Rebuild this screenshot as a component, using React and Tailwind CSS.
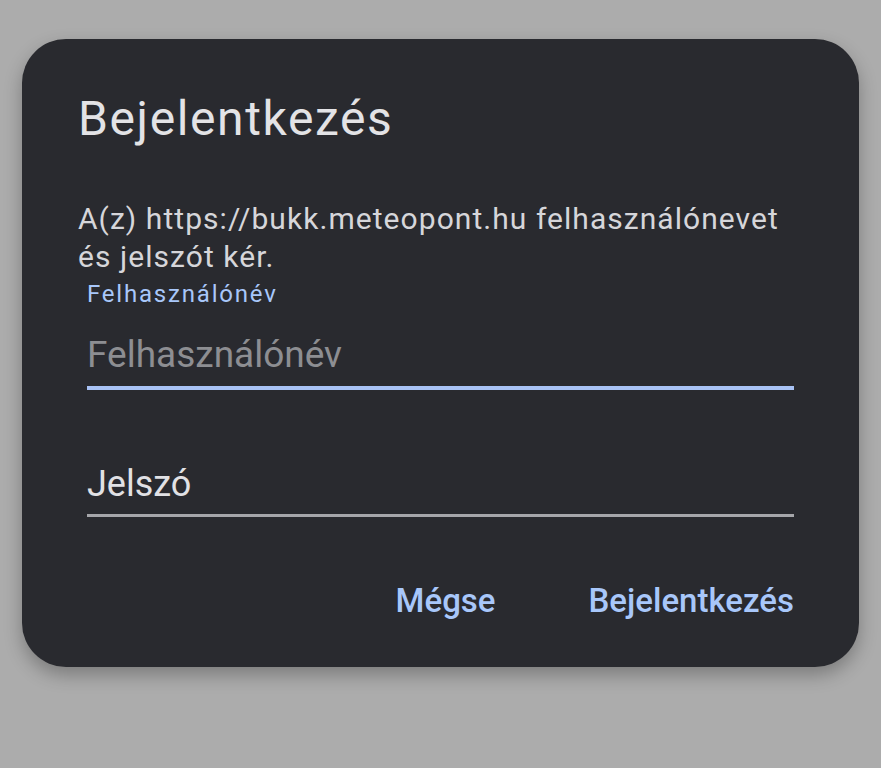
export default function App() {
  return (
    <div className="min-h-[768px] w-full bg-[#acacac] pt-[39px] px-[22px] font-['Roboto','Noto_Sans',sans-serif]">
      <div className="w-[837px] h-[628px] rounded-[44px] bg-[#292a2f] shadow-[0_8px_18px_rgba(0,0,0,0.28)] pl-[56px] pr-[65px] pt-[52px]">
        <h1 className="text-[48px] leading-[56px] text-[#e3e3e6] tracking-[1.6px]">Bejelentkezés</h1>
        <p className="mt-[53px] whitespace-nowrap text-[30px] leading-[38px] text-[#d6d6da] tracking-[1.05px]">
          A(z) https://bukk.meteopont.hu felhasználónevet
          <br />
          és jelszót kér.
        </p>
        <div className="pl-[9px]">
          <div className="mt-[4px] text-[24px] leading-[28px] text-[#a8c7fa] tracking-[1.8px]">Felhasználónév</div>
          <div className="mt-[25px] pb-[9px] border-b-4 border-[#a8c2f5]">
            <div className="text-[37px] leading-[44px] text-[#8d8e92]">Felhasználónév</div>
          </div>
          <div className="mt-[72px] pb-[8px] border-b-[3px] border-[#a5a6aa]">
            <div className="text-[36px] leading-[44px] text-[#e1e1e5]">Jelszó</div>
          </div>
          <div className="mt-[64px] flex justify-end gap-[93px] text-[33px] leading-[40px] font-medium text-[#a8c7fa]">
            <span>Mégse</span>
            <span>Bejelentkezés</span>
          </div>
        </div>
      </div>
    </div>
  );
}
